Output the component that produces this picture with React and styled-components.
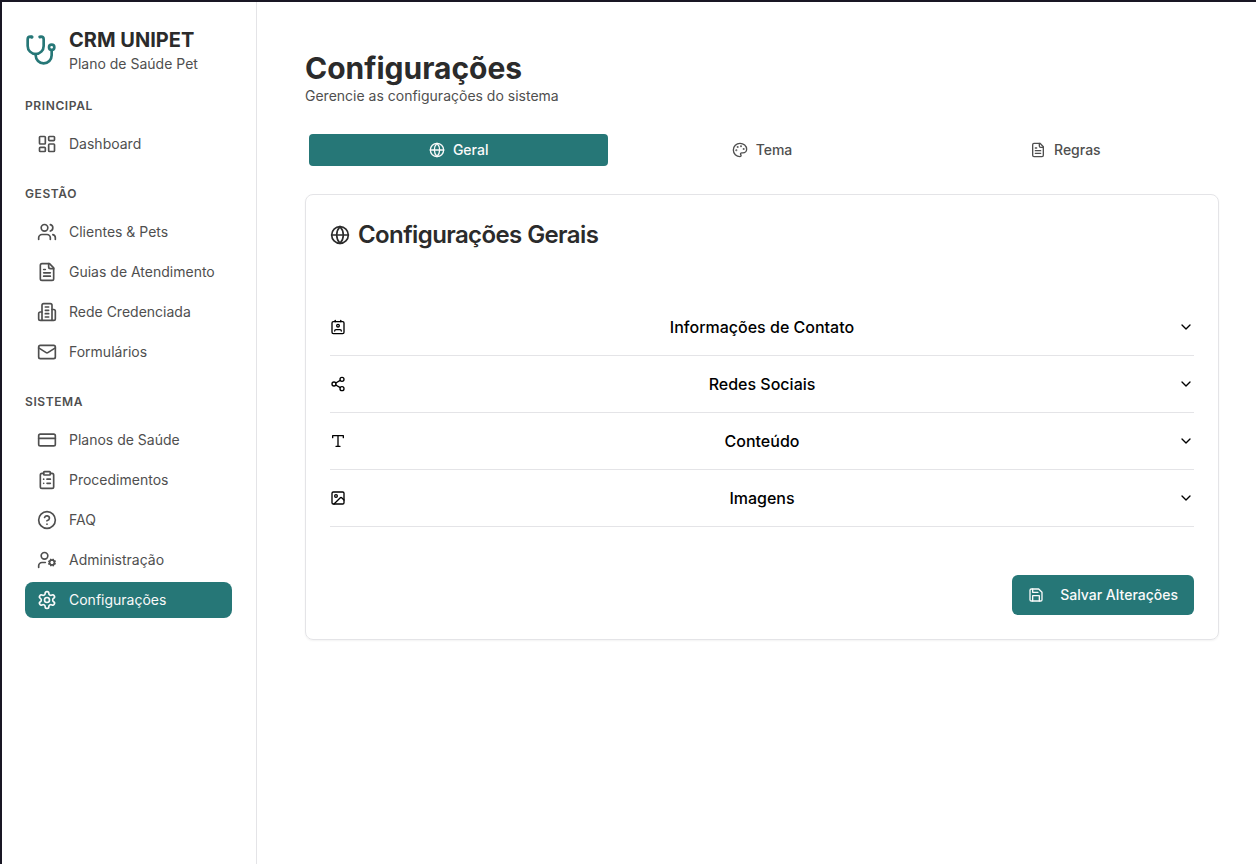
import React from "react";
import styled, { createGlobalStyle, css } from "styled-components";
import {
  LayoutDashboard, CreditCard, ClipboardList, CircleHelp, Globe, Share2, Image, ChevronDown,
} from "lucide-react";

const GlobalStyle = createGlobalStyle`
  *, *::before, *::after { box-sizing: border-box; }
  body {
    margin: 0;
    background: #ffffff;
    color: #2b2b2b;
    font-family: Inter, "Liberation Sans", sans-serif;
    font-size: 14px;
    line-height: 20px;
  }
  h1, h2, h3, p, ul { margin: 0; padding: 0; }
  ul { list-style: none; }
  button { font: inherit; color: inherit; background: none; border: 0; padding: 0; cursor: pointer; }
  a { color: inherit; text-decoration: none; }
  svg { flex-shrink: 0; }
`;

const Page = styled.div`
  display: flex;
  min-height: 100vh;
  border-top: 2px solid #191724;
  border-left: 2px solid #191724;
`;

const Sidebar = styled.aside`
  flex: 0 0 255px;
  padding: 24px 24px 24px 23px;
  border-right: 1px solid #e4e4e7;
`;

const Brand = styled.div`
  display: flex;
  align-items: center;
  gap: 12px;
  margin-bottom: 24px;
  color: #267777;
`;

const BrandName = styled.p`
  font-size: 20px;
  line-height: 28px;
  font-weight: 700;
  color: #2b2b2b;
`;

const BrandTagline = styled.p`
  color: #4f4f4f;
`;

const Nav = styled.nav`
  display: flex;
  flex-direction: column;
  gap: 24px;
`;

const NavHeading = styled.h3`
  font-size: 12px;
  line-height: 16px;
  font-weight: 600;
  letter-spacing: 0.05em;
  text-transform: uppercase;
  color: #4f4f4f;
  margin-bottom: 12px;
`;

const NavList = styled.ul`
  display: flex;
  flex-direction: column;
  gap: 4px;
`;

const NavLink = styled.a`
  display: flex;
  align-items: center;
  gap: 12px;
  height: 36px;
  padding: 0 12px;
  border-radius: 8px;
  color: #4f4f4f;
  ${({ $active }) => $active && css`
    background: #267777;
    color: #fafafa;
  `}
`;

const Main = styled.main`
  flex: 1;
  min-width: 0;
  padding: 48px 37px 48px 48px;
`;

const Title = styled.h1`
  font-size: 30px;
  line-height: 36px;
  font-weight: 700;
`;

const Subtitle = styled.p`
  color: #4f4f4f;
`;

const Tabs = styled.div`
  display: grid;
  grid-template-columns: repeat(3, 1fr);
  gap: 4px;
  margin: 24px 0;
  padding: 4px;
`;

const Tab = styled.button`
  display: flex;
  align-items: center;
  justify-content: center;
  gap: 8px;
  height: 32px;
  border-radius: 4px;
  font-weight: 500;
  color: ${({ $active }) => ($active ? "#fafafa" : "#4f4f4f")};
  background: ${({ $active }) => ($active ? "#267777" : "transparent")};
`;

const Card = styled.section`
  padding: 24px;
  border: 1px solid #e4e4e7;
  border-radius: 8px;
  box-shadow: 0 1px 2px rgba(0, 0, 0, 0.05);
`;

const CardTitle = styled.h2`
  display: flex;
  align-items: center;
  gap: 8px;
  font-size: 24px;
  line-height: 32px;
  font-weight: 600;
  letter-spacing: -0.025em;
`;

const Accordion = styled.div`
  margin-top: 48px;
`;

const AccordionTrigger = styled.button`
  display: flex;
  align-items: center;
  justify-content: space-between;
  width: 100%;
  height: 57px;
  border-bottom: 1px solid #e4e4e7;
  font-size: 16px;
  line-height: 24px;
  font-weight: 500;
  color: #000000;
`;

const Actions = styled.div`
  display: flex;
  justify-content: flex-end;
  margin-top: 48px;
`;

const SaveButton = styled.button`
  display: flex;
  align-items: center;
  gap: 16px;
  height: 40px;
  padding: 0 16px;
  border-radius: 6px;
  font-weight: 500;
  color: #fafafa;
  background: #267777;
`;

const Glyph = ({ size, children }) => (
  <svg
    width={size}
    height={size}
    viewBox="0 0 24 24"
    fill="none"
    stroke="currentColor"
    strokeWidth="2"
    strokeLinecap="round"
    strokeLinejoin="round"
    aria-hidden="true"
  >
    {children}
  </svg>
);

const StethoscopeIcon = ({ size }) => (
  <Glyph size={size}>
    <path d="M4.8 2.3A.3.3 0 1 0 5 2H4a2 2 0 0 0-2 2v5a6 6 0 0 0 6 6a6 6 0 0 0 6-6V4a2 2 0 0 0-2-2h-1a.2.2 0 1 0 .3.3" />
    <path d="M8 15v1a6 6 0 0 0 6 6a6 6 0 0 0 6-6v-4" />
    <circle cx="20" cy="10" r="2" />
  </Glyph>
);

const UsersIcon = ({ size }) => (
  <Glyph size={size}>
    <path d="M16 21v-2a4 4 0 0 0-4-4H6a4 4 0 0 0-4 4v2" />
    <circle cx="9" cy="7" r="4" />
    <path d="M22 21v-2a4 4 0 0 0-3-3.87" />
    <path d="M16 3.13a4 4 0 0 1 0 7.75" />
  </Glyph>
);

const FileIcon = ({ size }) => (
  <Glyph size={size}>
    <path d="M15 2H6a2 2 0 0 0-2 2v16a2 2 0 0 0 2 2h12a2 2 0 0 0 2-2V7Z" />
    <path d="M14 2v4a2 2 0 0 0 2 2h4" />
    <path d="M10 9H8" />
    <path d="M16 13H8" />
    <path d="M16 17H8" />
  </Glyph>
);

const BuildingIcon = ({ size }) => (
  <Glyph size={size}>
    <path d="M6 22V4a2 2 0 0 1 2-2h8a2 2 0 0 1 2 2v18Z" />
    <path d="M6 12H4a2 2 0 0 0-2 2v6a2 2 0 0 0 2 2h2" />
    <path d="M18 9h2a2 2 0 0 1 2 2v9a2 2 0 0 1-2 2h-2" />
    <path d="M10 6h4" />
    <path d="M10 10h4" />
    <path d="M10 14h4" />
    <path d="M10 18h4" />
  </Glyph>
);

const MailIcon = ({ size }) => (
  <Glyph size={size}>
    <rect width="20" height="16" x="2" y="4" rx="2" />
    <path d="m22 7-8.97 5.7a1.94 1.94 0 0 1-2.06 0L2 7" />
  </Glyph>
);

const UserCogIcon = ({ size }) => (
  <Glyph size={size}>
    <circle cx="18" cy="15" r="3" />
    <circle cx="9" cy="7" r="4" />
    <path d="M10 15H6a4 4 0 0 0-4 4v2" />
    <path d="m21.7 16.4-.9-.3" />
    <path d="m15.2 13.9-.9-.3" />
    <path d="m16.6 18.7.3-.9" />
    <path d="m19.1 12.2.3-.9" />
    <path d="m19.6 18.7-.4-1" />
    <path d="m16.8 12.3-.4-1" />
    <path d="m14.3 16.6 1-.4" />
    <path d="m20.7 13.8 1-.4" />
  </Glyph>
);

const SettingsIcon = ({ size }) => (
  <Glyph size={size}>
    <path d="M12.22 2h-.44a2 2 0 0 0-2 2v.18a2 2 0 0 1-1 1.73l-.43.25a2 2 0 0 1-2 0l-.15-.08a2 2 0 0 0-2.73.73l-.22.38a2 2 0 0 0 .73 2.73l.15.1a2 2 0 0 1 1 1.72v.51a2 2 0 0 1-1 1.74l-.15.09a2 2 0 0 0-.73 2.73l.22.38a2 2 0 0 0 2.73.73l.15-.08a2 2 0 0 1 2 0l.43.25a2 2 0 0 1 1 1.73V20a2 2 0 0 0 2 2h.44a2 2 0 0 0 2-2v-.18a2 2 0 0 1 1-1.73l.43-.25a2 2 0 0 1 2 0l.15.08a2 2 0 0 0 2.73-.73l.22-.39a2 2 0 0 0-.73-2.73l-.15-.08a2 2 0 0 1-1-1.74v-.5a2 2 0 0 1 1-1.74l.15-.09a2 2 0 0 0 .73-2.73l-.22-.38a2 2 0 0 0-2.73-.73l-.15.08a2 2 0 0 1-2 0l-.43-.25a2 2 0 0 1-1-1.73V4a2 2 0 0 0-2-2z" />
    <circle cx="12" cy="12" r="3" />
  </Glyph>
);

const PaletteIcon = ({ size }) => (
  <Glyph size={size}>
    <circle cx="13.5" cy="6.5" r=".5" fill="currentColor" />
    <circle cx="17.5" cy="10.5" r=".5" fill="currentColor" />
    <circle cx="8.5" cy="7.5" r=".5" fill="currentColor" />
    <circle cx="6.5" cy="12.5" r=".5" fill="currentColor" />
    <path d="M12 2C6.5 2 2 6.5 2 12s4.5 10 10 10c.926 0 1.648-.746 1.648-1.688 0-.437-.18-.835-.437-1.125-.29-.289-.438-.652-.438-1.125a1.64 1.64 0 0 1 1.668-1.668h1.996c3.051 0 5.555-2.503 5.555-5.554C21.965 6.012 17.461 2 12 2z" />
  </Glyph>
);

const ContactIcon = ({ size }) => (
  <Glyph size={size}>
    <path d="M17 18a2 2 0 0 0-2-2H9a2 2 0 0 0-2 2" />
    <rect width="18" height="18" x="3" y="4" rx="2" />
    <circle cx="12" cy="10" r="2" />
    <path d="M8 2v2" />
    <path d="M16 2v2" />
  </Glyph>
);

const TypeIcon = ({ size }) => (
  <Glyph size={size}>
    <polyline points="4 7 4 4 20 4 20 7" />
    <path d="M9 20h6" />
    <path d="M12 4v16" />
  </Glyph>
);

const SaveIcon = ({ size }) => (
  <Glyph size={size}>
    <path d="M19 21H5a2 2 0 0 1-2-2V5a2 2 0 0 1 2-2h11l5 5v11a2 2 0 0 1-2 2z" />
    <polyline points="17 21 17 13 7 13 7 21" />
    <polyline points="7 3 7 8 15 8" />
  </Glyph>
);

const sections = [
  { title: "Principal", items: [{ icon: LayoutDashboard, label: "Dashboard" }] },
  {
    title: "Gestão",
    items: [
      { icon: UsersIcon, label: "Clientes & Pets" },
      { icon: FileIcon, label: "Guias de Atendimento" },
      { icon: BuildingIcon, label: "Rede Credenciada" },
      { icon: MailIcon, label: "Formulários" },
    ],
  },
  {
    title: "Sistema",
    items: [
      { icon: CreditCard, label: "Planos de Saúde" },
      { icon: ClipboardList, label: "Procedimentos" },
      { icon: CircleHelp, label: "FAQ" },
      { icon: UserCogIcon, label: "Administração" },
      { icon: SettingsIcon, label: "Configurações", active: true },
    ],
  },
];

const tabs = [
  { icon: Globe, label: "Geral", active: true },
  { icon: PaletteIcon, label: "Tema" },
  { icon: FileIcon, label: "Regras" },
];

const groups = [
  { icon: ContactIcon, label: "Informações de Contato" },
  { icon: Share2, label: "Redes Sociais" },
  { icon: TypeIcon, label: "Conteúdo" },
  { icon: Image, label: "Imagens" },
];

export default function App() {
  return (
    <>
      <GlobalStyle />
      <Page>
        <Sidebar>
          <Brand>
            <StethoscopeIcon size={32} />
            <div>
              <BrandName>CRM UNIPET</BrandName>
              <BrandTagline>Plano de Saúde Pet</BrandTagline>
            </div>
          </Brand>
          <Nav>
            {sections.map(({ title, items }) => (
              <section key={title}>
                <NavHeading>{title}</NavHeading>
                <NavList>
                  {items.map(({ icon: Icon, label, active }) => (
                    <li key={label}>
                      <NavLink href="#" $active={active} aria-current={active ? "page" : undefined}>
                        <Icon size={20} />
                        {label}
                      </NavLink>
                    </li>
                  ))}
                </NavList>
              </section>
            ))}
          </Nav>
        </Sidebar>
        <Main>
          <Title>Configurações</Title>
          <Subtitle>Gerencie as configurações do sistema</Subtitle>
          <Tabs role="tablist">
            {tabs.map(({ icon: Icon, label, active }) => (
              <Tab key={label} type="button" role="tab" aria-selected={!!active} $active={active}>
                <Icon size={16} />
                {label}
              </Tab>
            ))}
          </Tabs>
          <Card>
            <CardTitle>
              <Globe size={20} />
              Configurações Gerais
            </CardTitle>
            <Accordion>
              {groups.map(({ icon: Icon, label }) => (
                <AccordionTrigger key={label} type="button" aria-expanded={false}>
                  <Icon size={16} />
                  {label}
                  <ChevronDown size={16} />
                </AccordionTrigger>
              ))}
            </Accordion>
            <Actions>
              <SaveButton type="button">
                <SaveIcon size={16} />
                Salvar Alterações
              </SaveButton>
            </Actions>
          </Card>
        </Main>
      </Page>
    </>
  );
}
